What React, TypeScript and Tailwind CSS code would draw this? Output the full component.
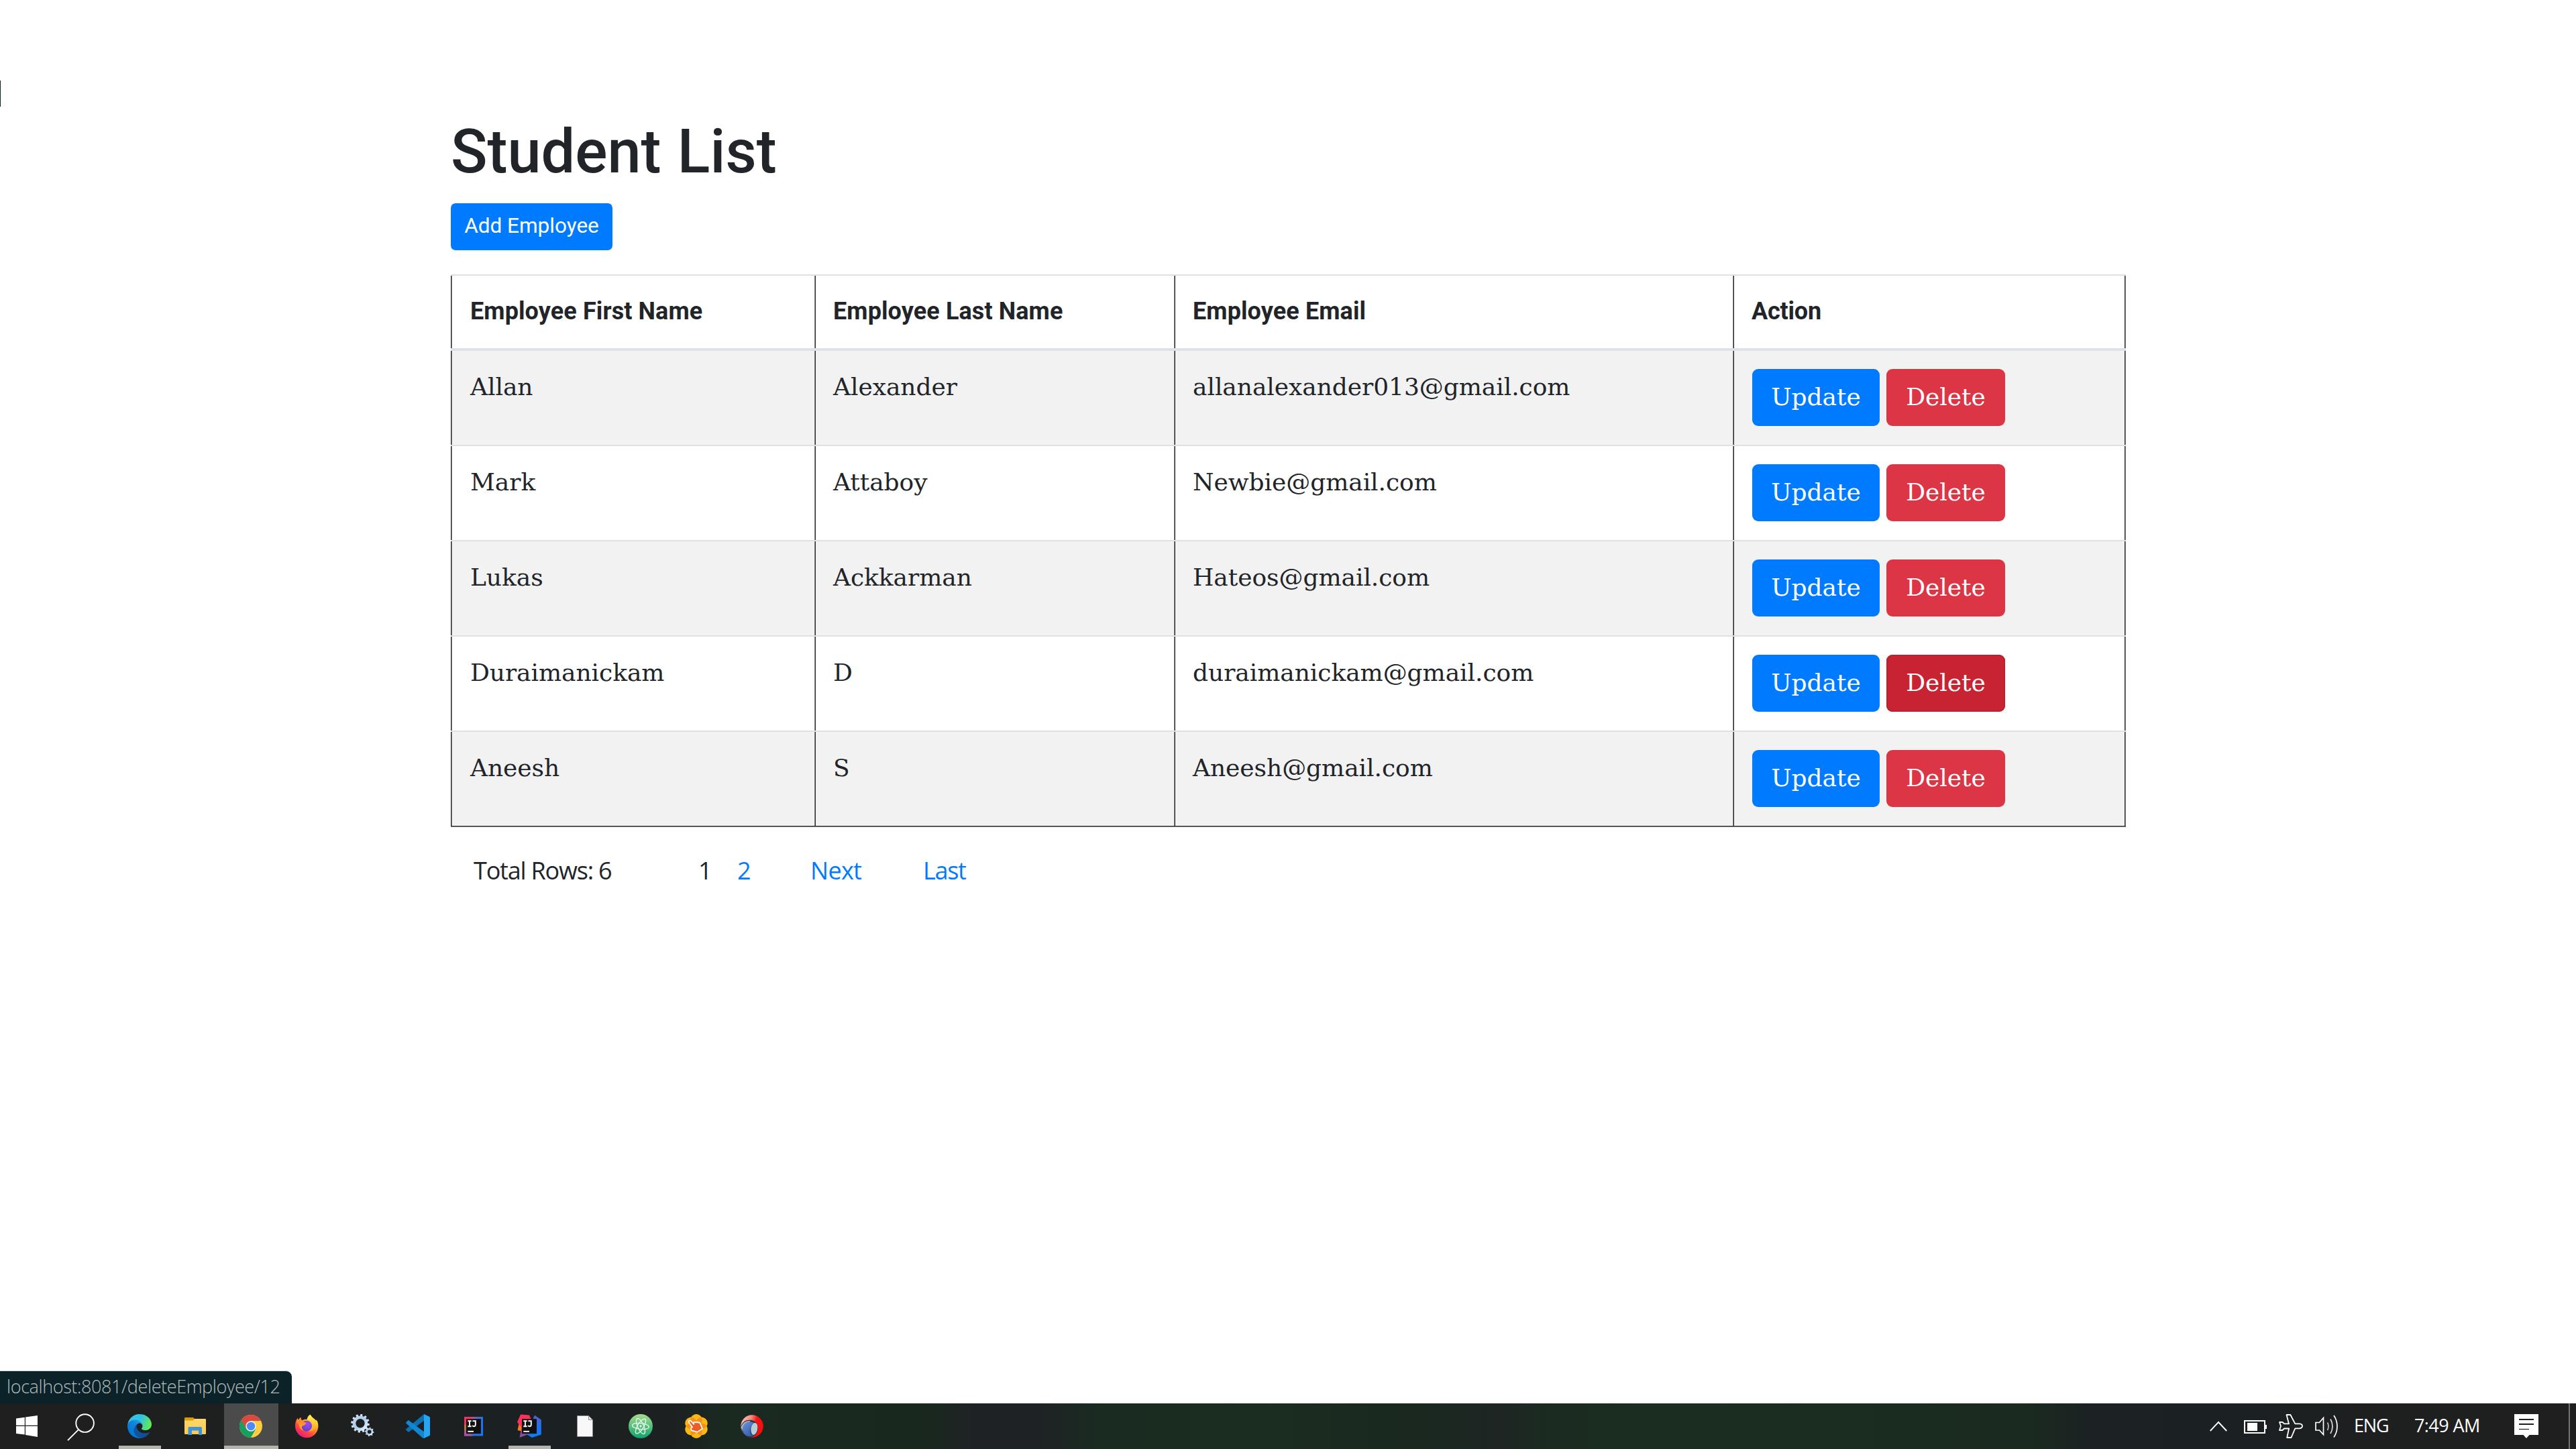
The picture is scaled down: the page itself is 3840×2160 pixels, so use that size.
import type { ReactNode } from 'react';

type Employee = { first: string; last: string; email: string; active?: boolean };

const employees: Employee[] = [
  { first: 'Allan', last: 'Alexander', email: 'allanalexander013@gmail.com' },
  { first: 'Mark', last: 'Attaboy', email: 'Newbie@gmail.com' },
  { first: 'Lukas', last: 'Ackkarman', email: 'Hateos@gmail.com' },
  { first: 'Duraimanickam', last: 'D', email: 'duraimanickam@gmail.com', active: true },
  { first: 'Aneesh', last: 'S', email: 'Aneesh@gmail.com' },
];

const columns = 'grid grid-cols-[542px_536px_833px_586px]';
const firstEdge = 'shadow-[inset_1px_0_#2c2c2c,inset_2px_0_#808080]';
const innerEdge = 'shadow-[inset_1px_0_#808080,inset_2px_0_#2c2c2c]';
const lastEdge =
  'shadow-[inset_1px_0_#808080,inset_2px_0_#2c2c2c,inset_-1px_0_#808080,inset_-2px_0_#2c2c2c]';

function Row({ e, striped }: { e: Employee; striped: boolean }) {
  const cell = 'pt-[27px] h-[140px] leading-[54px] tracking-[-0.05px]';
  return (
    <div className={`${columns} ${striped ? 'bg-[#f2f2f2]' : 'bg-white'}`}>
      <div className={`${cell} pl-[29px] ${firstEdge}`}>{e.first}</div>
      <div className={`${cell} pl-[28px] ${innerEdge}`}>{e.last}</div>
      <div className={`${cell} pl-[28px] ${innerEdge}`}>{e.email}</div>
      <div className={`${cell} pl-[29px] flex gap-[10px] ${lastEdge}`}>
        <button className="flex h-[85px] w-[190px] items-center justify-center rounded-[9px] bg-[#007bff] pb-[2px] text-white">
          Update
        </button>
        <button
          className={`flex h-[85px] w-[177px] items-center justify-center rounded-[9px] pb-[2px] text-white ${
            e.active ? 'bg-[#c82333] shadow-[inset_0_0_0_2px_#bd2130]' : 'bg-[#dc3545]'
          }`}
        >
          Delete
        </button>
      </div>
    </div>
  );
}

function WindowsIcon() {
  return (
    <svg width="32" height="32" viewBox="0 0 32 32" fill="#fff">
      <path d="M0 4.6 12.8 2.8V14.8H0zM14 2.6 32 0V14.8H14zM0 16H12.8V28.6L0 27zM14 16H32V32L14 29z" />
    </svg>
  );
}

function SearchIcon() {
  return (
    <svg width="42" height="42" viewBox="0 0 42 42" fill="none" stroke="#fff" strokeWidth="1.9">
      <circle cx="26.6" cy="14.6" r="13.3" />
      <path d="M17 24.2 1 40.2" />
    </svg>
  );
}

function EdgeIcon() {
  return (
    <svg width="36" height="36" viewBox="0 0 256 256">
      <defs>
        <linearGradient id="edgeA" x1="63" y1="177" x2="241" y2="177" gradientUnits="userSpaceOnUse">
          <stop offset="0" stopColor="#0c59a4" />
          <stop offset="1" stopColor="#114a8b" />
        </linearGradient>
        <linearGradient id="edgeB" x1="157" y1="98" x2="46" y2="219" gradientUnits="userSpaceOnUse">
          <stop offset="0" stopColor="#1b9de2" />
          <stop offset=".4" stopColor="#1383d9" />
          <stop offset="1" stopColor="#0078d7" />
        </linearGradient>
        <linearGradient id="edgeC" x1="30" y1="50" x2="245" y2="140" gradientUnits="userSpaceOnUse">
          <stop offset="0" stopColor="#35c1f1" />
          <stop offset=".45" stopColor="#2fc3df" />
          <stop offset="1" stopColor="#66eb4a" />
        </linearGradient>
      </defs>
      <g transform="translate(-4.63 -4.92)">
        <path
          fill="url(#edgeA)"
          d="M235.68 195.46a93.73 93.73 0 0 1-10.54 4.71 101.87 101.87 0 0 1-35.9 6.46c-47.32 0-88.54-32.55-88.54-74.32A31.48 31.48 0 0 1 117.13 105c-42.8 1.8-53.8 46.4-53.8 72.53 0 73.88 68.09 81.37 82.76 81.37 7.91 0 19.84-2.3 27-4.56l1.31-.44a128.34 128.34 0 0 0 66.6-52.8 4 4 0 0 0-5.32-5.64Z"
        />
        <path
          fill="url(#edgeB)"
          d="M110.34 246.34A79.2 79.2 0 0 1 87.6 225a80.72 80.72 0 0 1 29.53-120c3.12-1.47 8.45-4.13 15.54-4a32.35 32.35 0 0 1 25.69 13 31.88 31.88 0 0 1 6.36 18.66c0-.21 24.46-79.6-80-79.6-43.9 0-80 41.66-80 78.21a130.15 130.15 0 0 0 12.11 56 128 128 0 0 0 156.38 67.11 75.55 75.55 0 0 1-62.78-8Z"
        />
        <path
          fill="url(#edgeC)"
          d="M156.94 153.78c-.81 1.05-3.3 2.5-3.3 5.66 0 2.61 1.7 5.12 4.72 7.23 14.38 10 41.49 8.68 41.56 8.68a59.56 59.56 0 0 0 30.27-8.35 61.38 61.38 0 0 0 30.43-52.88c.26-22.41-8-37.31-11.34-43.91C228.09 28.76 182.35 4.92 132.61 4.92a128 128 0 0 0-128 126.2c.48-36.54 36.8-66.05 80-66.05 3.5 0 23.46.34 42 10.07 16.34 8.58 24.9 18.94 30.85 29.21 6.18 10.67 7.28 24.15 7.28 29.52s-2.74 13.33-7.8 19.91Z"
        />
      </g>
    </svg>
  );
}

function FolderIcon() {
  return (
    <svg width="36" height="36" viewBox="0 0 36 36">
      <defs>
        <linearGradient id="folder" x1="0" y1="0" x2="0" y2="1">
          <stop offset="0" stopColor="#ffd869" />
          <stop offset="1" stopColor="#ffcb47" />
        </linearGradient>
      </defs>
      <path fill="#dd9c00" d="M2 6a1 1 0 0 1 1-1h12l1.600 1.500V10H2z" />
      <path fill="url(#folder)" d="M2 9.500h12.500l2.500-2.500H33a1 1 0 0 1 1 1v21a1 1 0 0 1-1 1H3a1 1 0 0 1-1-1z" />
      <path fill="#3b96dd" d="M7.500 20.500a1.500 1.500 0 0 1 1.500-1.500h17.500a1.500 1.500 0 0 1 1.500 1.500V31h-5v-6.500H13V31H7.500z" />
    </svg>
  );
}

function ChromeIcon() {
  return (
    <svg width="34" height="34" viewBox="0 0 34 34">
      <circle cx="17" cy="17" r="17" fill="#ffcd40" />
      <path fill="#db4a3f" d="M2.280 8.500A17 17 0 0 1 31.900 9H17l-7.200 12z" />
      <path fill="#16a05e" d="M2.500 8.100A17 17 0 0 0 17 34l7-12.400H17L9.900 20.700z" />
      <circle cx="17" cy="17" r="7.700" fill="#f1f1f1" />
      <circle cx="17" cy="17" r="6.200" fill="#4c8bf5" />
    </svg>
  );
}

function FirefoxIcon() {
  return (
    <svg width="36" height="36" viewBox="0 0 36 36">
      <defs>
        <linearGradient id="ffBody" x1="28" y1="4" x2="8" y2="34" gradientUnits="userSpaceOnUse">
          <stop offset="0" stopColor="#fff14a" />
          <stop offset=".35" stopColor="#ff9a2a" />
          <stop offset=".68" stopColor="#ff4540" />
          <stop offset="1" stopColor="#e31587" />
        </linearGradient>
        <radialGradient id="ffGlobe" cx=".6" cy=".3" r=".8">
          <stop offset="0" stopColor="#a04af0" />
          <stop offset="1" stopColor="#5a3fc8" />
        </radialGradient>
        <linearGradient id="ffTail" x1="0" y1="0" x2="0" y2="1">
          <stop offset="0" stopColor="#fff44f" />
          <stop offset="1" stopColor="#ff9e1f" />
        </linearGradient>
      </defs>
      <path
        fill="url(#ffBody)"
        d="M23.500.800c-3 2-4.500 4.500-4.700 7-3-.4-5.600.1-7.500 1.500C10 8.300 9.400 6.600 9.700 4.800 8 5.600 6.700 7 5.800 8.600 4.900 8 4.500 7 4.600 5.800 2.400 8.700 1 13 1 18a17.200 17.200 0 0 0 34.400 0c0-4-1-7.500-3-10l.2 2.200C31 7.600 26.500 5.800 23.500.800z"
      />
      <circle cx="18" cy="17.800" r="8" fill="url(#ffGlobe)" />
      <path
        fill="url(#ffTail)"
        d="M23.500.800c-3 2-4.600 4.600-4.700 7.300 4.700.9 7.700 4.400 7.600 8.900-.1 4.200-3 7.500-6.600 8.400 6.700 1.300 13-3.400 13.400-10.400.2-6-7.200-8.100-9.700-14.200z"
      />
      <path
        fill="#ffa02c"
        d="M4.600 5.800C3.200 9 3.600 12 6 14.500c2.600-.6 5 .4 7.500.3 1.800 0 3-.4 4-1.500-.6 2.400-3 3.600-5.700 4.200-1.800 1.600-.6 5 2.200 7-4-.6-7-4-7.200-8.500z"
      />
      <path fill="#ff9226" d="M6 13c2-2.500 7-2.200 11.500-.2-1 2-3.500 3-6.500 3.600z" />
    </svg>
  );
}

function Gear({ x, y, r, teeth, fill, stroke }: { x: number; y: number; r: number; teeth: number; fill: string; stroke: number }) {
  return (
    <g transform={`translate(${x} ${y})`}>
      {Array.from({ length: teeth }, (_, i) => (
        <rect
          key={i}
          x={-r * 0.14}
          y={-r * 1.22}
          width={r * 0.28}
          height={r * 0.4}
          fill="#d6e6f8"
          transform={`rotate(${(360 / teeth) * i + 8})`}
        />
      ))}
      <circle r={r - stroke / 2} fill="none" stroke={fill} strokeWidth={stroke} />
    </g>
  );
}

function GearsIcon() {
  return (
    <svg width="36" height="36" viewBox="0 0 36 36">
      <defs>
        <linearGradient id="steel" x1="0" y1="0" x2="1" y2="1">
          <stop offset="0" stopColor="#c3d3e6" />
          <stop offset=".5" stopColor="#a9cbf0" />
          <stop offset="1" stopColor="#e4f2ff" />
        </linearGradient>
      </defs>
      <Gear x={15} y={13.8} r={11.3} teeth={12} fill="url(#steel)" stroke={4.6} />
      <Gear x={28.7} y={26.3} r={5.6} teeth={8} fill="url(#steel)" stroke={2.7} />
    </svg>
  );
}

function VsCodeIcon() {
  return (
    <svg width="36" height="36" viewBox="0 0 36 36">
      <path fill="#0f6fb3" d="M27 0v9.800L4.600 26.600c-.5.400-1.100.300-1.500-.1L.6 24c-.7-.6-.6-1.500 0-2.100z" />
      <path fill="#1187d2" d="M27 36v-9.800L4.600 9.400c-.5-.4-1.100-.3-1.500.1L.6 12c-.7.6-.6 1.500 0 2.100L25 35.500z" />
      <path fill="#27a5f2" d="m27 0 8 3.800c.7.300 1 .9 1 1.600v25.200c0 .7-.3 1.300-1 1.600L27 36z" />
    </svg>
  );
}

function IjLetters() {
  return (
    <g fill="none" stroke="#fff" strokeWidth="1.900">
      <path d="M0 1h5.300M0 9h5.300M2.650 1v8M7.200 1h4.300v5.600c0 1.600-.9 2.500-2.300 2.500-1.100 0-1.800-.4-2.500-1.100" />
      <path d="M0 16.600h8.700" />
    </g>
  );
}

function IntelliJClassicIcon() {
  return (
    <svg width="36" height="36" viewBox="0 0 36 36">
      <defs>
        <linearGradient id="ijFrame" x1="0" y1=".3" x2="1" y2=".7">
          <stop offset="0" stopColor="#f8744a" />
          <stop offset=".3" stopColor="#a457a0" />
          <stop offset=".65" stopColor="#2f6fe0" />
          <stop offset="1" stopColor="#1477f0" />
        </linearGradient>
      </defs>
      <path fill="url(#ijFrame)" d="M4 4h28v28.500H4z" />
      <path fill="#f5325f" d="M4 4h13l-4 4H7v8H4z" />
      <path fill="#b07838" d="M4 16h3v8H4z" />
      <path fill="#a8559a" d="M4 24h3v5h6l4 3.500H4z" />
      <path fill="#101010" d="M7 7.200h22v22H7z" />
      <g transform="translate(9.300 9.200)">
        <IjLetters />
      </g>
    </svg>
  );
}

function IntelliJIcon() {
  return (
    <svg width="36" height="36" viewBox="0 0 36 36">
      <defs>
        <linearGradient id="ijBlue" x1="0" y1="0" x2="0" y2="1">
          <stop offset="0" stopColor="#5560c8" />
          <stop offset=".6" stopColor="#1a74f5" />
          <stop offset="1" stopColor="#0f7bf8" />
        </linearGradient>
      </defs>
      <path fill="#f97a12" d="M.5 24 3 13l5 3v10z" />
      <path fill="#fe315d" d="m5 .5 13 1 3 7L8 22 0 12z" />
      <path fill="url(#ijBlue)" d="m26 1.500 9.800 7v22L22 35l-8-5z" />
      <path fill="#8a4fa5" d="m3.500 35 3-15h10v10z" />
      <path fill="#101010" d="M7 7.200h22v22H7z" />
      <g transform="translate(9.300 9.200)">
        <IjLetters />
      </g>
    </svg>
  );
}

function PageIcon() {
  return (
    <svg width="24" height="32" viewBox="0 0 24 32">
      <path fill="#f8f8f8" stroke="#8d8d8d" strokeWidth="1" d="M.5.500h17l6 6v25H.5z" />
      <path fill="#e4e4e4" stroke="#8d8d8d" strokeWidth="1" d="M17.500.500v6h6z" />
    </svg>
  );
}

function AtomIcon() {
  return (
    <svg width="36" height="36" viewBox="0 0 36 36">
      <defs>
        <linearGradient id="atom" x1="0" y1="0" x2="0" y2="1">
          <stop offset="0" stopColor="#a5dc90" />
          <stop offset="1" stopColor="#0fa26c" />
        </linearGradient>
      </defs>
      <circle cx="18" cy="18" r="18" fill="url(#atom)" />
      <g fill="none" stroke="#e8f8ec" strokeWidth="1.300">
        <ellipse cx="18" cy="18" rx="12.500" ry="4.500" transform="rotate(6 18 18)" />
        <ellipse cx="18" cy="18" rx="12.500" ry="4.500" transform="rotate(66 18 18)" />
        <ellipse cx="18" cy="18" rx="12.500" ry="4.500" transform="rotate(-58 18 18)" />
      </g>
      <circle cx="18" cy="18" r="1.500" fill="#fff" />
    </svg>
  );
}

function HandFlowerIcon() {
  return (
    <svg width="36" height="36" viewBox="0 0 36 36">
      {[0, 60, 120, 180, 240, 300].map((a) => (
        <circle key={a} cx="18" cy="9" r="8.900" fill="#fdb813" transform={`rotate(${a} 18 18)`} />
      ))}
      {[30, 90, 150, 210, 270, 330].map((a) => (
        <ellipse key={a} cx="18" cy="10" rx="4" ry="6.500" fill="#f7901e" transform={`rotate(${a} 18 18)`} />
      ))}
      <circle cx="18" cy="18" r="9" fill="#f7901e" />
      <path
        fill="#ef5b25"
        stroke="#fff"
        strokeWidth="1.700"
        strokeLinejoin="round"
        d="M7.200 10.200c1-.8 2.200-.5 3 .4l4 4.400-.3-2.200c1-1.300 2.500-1.200 3.300-.2 1-1 2.600-.9 3.300.2 1.200-.6 2.600-.2 3.200 1l3.300 7.800-7.500 5-8.500-2.200c-.7-1.500-1-3-.7-4.200l1.800-.7-4.700-6.600c-.8-1-1-2-.2-2.700z"
      />
    </svg>
  );
}

function SwirlIcon() {
  return (
    <svg width="34" height="34" viewBox="0 0 34 34">
      <defs>
        <linearGradient id="swirlRed" x1="0" y1=".2" x2="1" y2=".5">
          <stop offset="0" stopColor="#fbc3b4" />
          <stop offset=".4" stopColor="#f78b80" />
          <stop offset=".65" stopColor="#f51414" />
          <stop offset="1" stopColor="#ff0a0a" />
        </linearGradient>
        <linearGradient id="swirlBlue" x1="0" y1="0" x2="1" y2="1">
          <stop offset="0" stopColor="#6f96d8" />
          <stop offset="1" stopColor="#1f4a9c" />
        </linearGradient>
      </defs>
      <circle cx="17" cy="17" r="16.700" fill="url(#swirlRed)" />
      <path fill="#2b2f3a" d="M.4 17C3 9.500 10 6.500 16 8c7 1.500 10.500 7 10 13-.5 6-4.500 11-10.500 12.600C6.500 33 .4 26 .4 17z" />
      <path fill="#a9b9c4" d="M.6 19C3 11 9.500 8.300 15 9.200l-3 2C6 12 3 17 2.500 24z" />
      <circle cx="13.800" cy="21.200" r="11" fill="url(#swirlBlue)" />
      <ellipse cx="20.400" cy="20.800" rx="4.800" ry="9" fill="#b9cdd2" transform="rotate(10 20.400 20.800)" />
      <path fill="#1c2430" d="M19 12c-5 4-5.500 12-1.500 18.500-4-2-5-13 1.500-18.500z" />
    </svg>
  );
}

function Task({ children, open, focused }: { children: ReactNode; open?: boolean; focused?: boolean }) {
  return (
    <div className={`flex h-[68px] w-[81px] shrink-0 flex-col items-center ${focused ? 'bg-[#4b4b4b]' : ''}`}>
      <div className="flex h-[63px] items-center pr-[1px] pt-[5px]">{children}</div>
      {focused && <div className="h-[5px] w-full bg-[#b4b4af]" />}
      {open && !focused && <div className="h-[5px] w-[63px] bg-[#b3b3b0]" />}
    </div>
  );
}

function Taskbar() {
  return (
    <div className="flex h-[68px] w-full shrink-0 items-center bg-[linear-gradient(90deg,#1f1f1f_0px,#1e1f1f_500px,#1b2022_760px,#1c2021_1000px,#1a2a20_1090px,#19281f_1380px,#1f2224_1450px,#1f2224_1550px,#1a2b21_1640px,#1b2c20_1900px,#1a2820_2120px,#1e2523_2230px,#1b2b21_2310px,#1b2d20_2560px,#1a2a20_3030px,#1c2123_3110px,#1b2022_3350px,#1e1f1f_3560px,#1f1f1f_3840px)]">
      <div className="flex w-[80px] justify-center">
        <WindowsIcon />
      </div>
      <div className="flex w-[88px] pl-[20px] pt-[3px]">
        <SearchIcon />
      </div>
      <div className="flex gap-[2px]">
        <Task open><EdgeIcon /></Task>
        <Task><FolderIcon /></Task>
        <Task focused><ChromeIcon /></Task>
        <Task><FirefoxIcon /></Task>
        <Task><GearsIcon /></Task>
        <Task><VsCodeIcon /></Task>
        <Task><IntelliJClassicIcon /></Task>
        <Task open><IntelliJIcon /></Task>
        <Task><PageIcon /></Task>
        <Task><AtomIcon /></Task>
        <Task><HandFlowerIcon /></Task>
        <Task><SwirlIcon /></Task>
      </div>
      <div className="ml-auto flex h-full items-center font-['Open_Sans',sans-serif] text-[27px] text-white">
        <svg className="mr-[25px]" width="26" height="16" viewBox="0 0 26 16" fill="none" stroke="#fff" strokeWidth="1.900">
          <path d="M.8 15 13 2l12.200 13" />
        </svg>
        <svg className="mr-[18px] mt-[2px]" width="34" height="20" viewBox="0 0 34 20">
          <path fill="none" stroke="#fff" strokeWidth="2" d="M1 1h30v18H1z" />
          <path fill="#fff" d="M5 4h15v12H5zM31 7h3v6h-3z" />
        </svg>
        <svg className="mr-[18px]" width="36" height="36" viewBox="0 0 36 36" fill="none" stroke="#fff" strokeWidth="1.800" strokeLinejoin="round">
          <path d="M11.500 1h5.800l7 13.300H31c2.700.3 4 2 4 3.500s-1.300 3.200-4 3.500h-6.700L18.500 35h-6.300l2.900-13.500H8L5.500 24H1l2-6.200L1 12h4.500L8 14.400h7z" />
        </svg>
        <svg className="mr-[22px]" width="36" height="34" viewBox="0 0 36 34" fill="none" stroke="#fff" strokeWidth="1.700">
          <path d="M1 11.500h5.500l6-7v25l-6-6.500H1z" />
          <path d="M18.500 11.500c1.800 3.500 1.800 8 0 11.500" stroke="#bbb" />
          <path d="M23 6.500c4 6.500 4 15 0 21.500" stroke="#ddd" />
          <path d="M28 1c6.600 9.500 6.600 23 0 32.500" />
        </svg>
        <span className="w-[90px] pb-px tracking-[-1.2px]">ENG</span>
        <span className="w-[149px] whitespace-nowrap pb-px tracking-[-0.6px]">7:49 AM</span>
        <svg className="mr-[45px]" width="36" height="36" viewBox="0 0 36 36">
          <path fill="#fff" d="M0 0h36v31H22.500L18 36l-4.500-5H0z" />
          <path stroke="#1f1f1f" strokeWidth="2" d="M7 8h22M7 15h22" />
          <path stroke="#1f1f1f" strokeWidth="1.200" d="M7 22.500h15" />
        </svg>
        <div className="mr-[9px] h-full w-[2px] bg-[#727272]" />
      </div>
    </div>
  );
}

export default function App() {
  return (
    <div className="flex h-[2160px] w-[3840px] flex-col overflow-hidden bg-white text-[#212529]">
      <div className="flex h-[2043px] items-start">
        <div className="mt-[120px] h-[39px] w-px bg-[#0b2329]" />
        <main className="ml-[671px] mt-[172px] w-[2497px] font-['DejaVu_Serif',serif] text-[36px]">
          <h1 className="h-[131px] pt-[1px] font-['Roboto',sans-serif] text-[90px] font-medium leading-[108px] [word-spacing:2px]">
            Student List
          </h1>
          <button className="flex h-[70px] w-[241px] items-center justify-center rounded-[7px] bg-[#007bff] pb-[3px] font-['Roboto',sans-serif] text-[31.5px] text-white">
            Add Employee
          </button>
          <section className="mt-[36px] border-t-2 border-[#dee2e6]">
            <div className={`${columns} font-['Roboto',sans-serif] font-bold leading-[54px] tracking-[0.1px]`}>
              <div className={`h-[108px] pl-[29px] pt-[26px] ${firstEdge}`}>Employee First Name</div>
              <div className={`h-[108px] pl-[28px] pt-[26px] ${innerEdge}`}>Employee Last Name</div>
              <div className={`h-[108px] pl-[28px] pt-[26px] ${innerEdge}`}>Employee Email</div>
              <div className={`h-[108px] pl-[28px] pt-[26px] tracking-[-0.2px] ${lastEdge}`}>Action</div>
            </div>
            <div className="h-[4px] bg-[#dee2e6]" />
            <div className="divide-y-2 divide-[#dee2e6]">
              {employees.map((e, i) => (
                <Row key={e.email} e={e} striped={i % 2 === 0} />
              ))}
            </div>
            <div className="h-[2px] bg-[#808080] shadow-[inset_0_1px_#2c2c2c]" />
          </section>
          <nav className="mt-[38px] grid grid-cols-[335px_58px_109px_168px_100px] pl-[34px] font-['Open_Sans',sans-serif] leading-[54px] text-[#007bff]">
            <span className="tracking-[-1.2px] text-[#212529]">Total Rows: 6</span>
            <span className="text-[#212529]">1</span>
            <a>2</a>
            <a className="tracking-[-0.7px]">Next</a>
            <a className="tracking-[-1.3px]">Last</a>
          </nav>
        </main>
      </div>
      <div className="h-[49px] w-[435px] rounded-tr-[9px] border-t border-[#d5d9da] bg-[#0a2228] pl-[10px] font-['Open_Sans',sans-serif] text-[27px] font-light leading-[46px] tracking-[-0.4px] text-[#b4bcbd]">
        localhost:8081/deleteEmployee/12
      </div>
      <Taskbar />
    </div>
  );
}
